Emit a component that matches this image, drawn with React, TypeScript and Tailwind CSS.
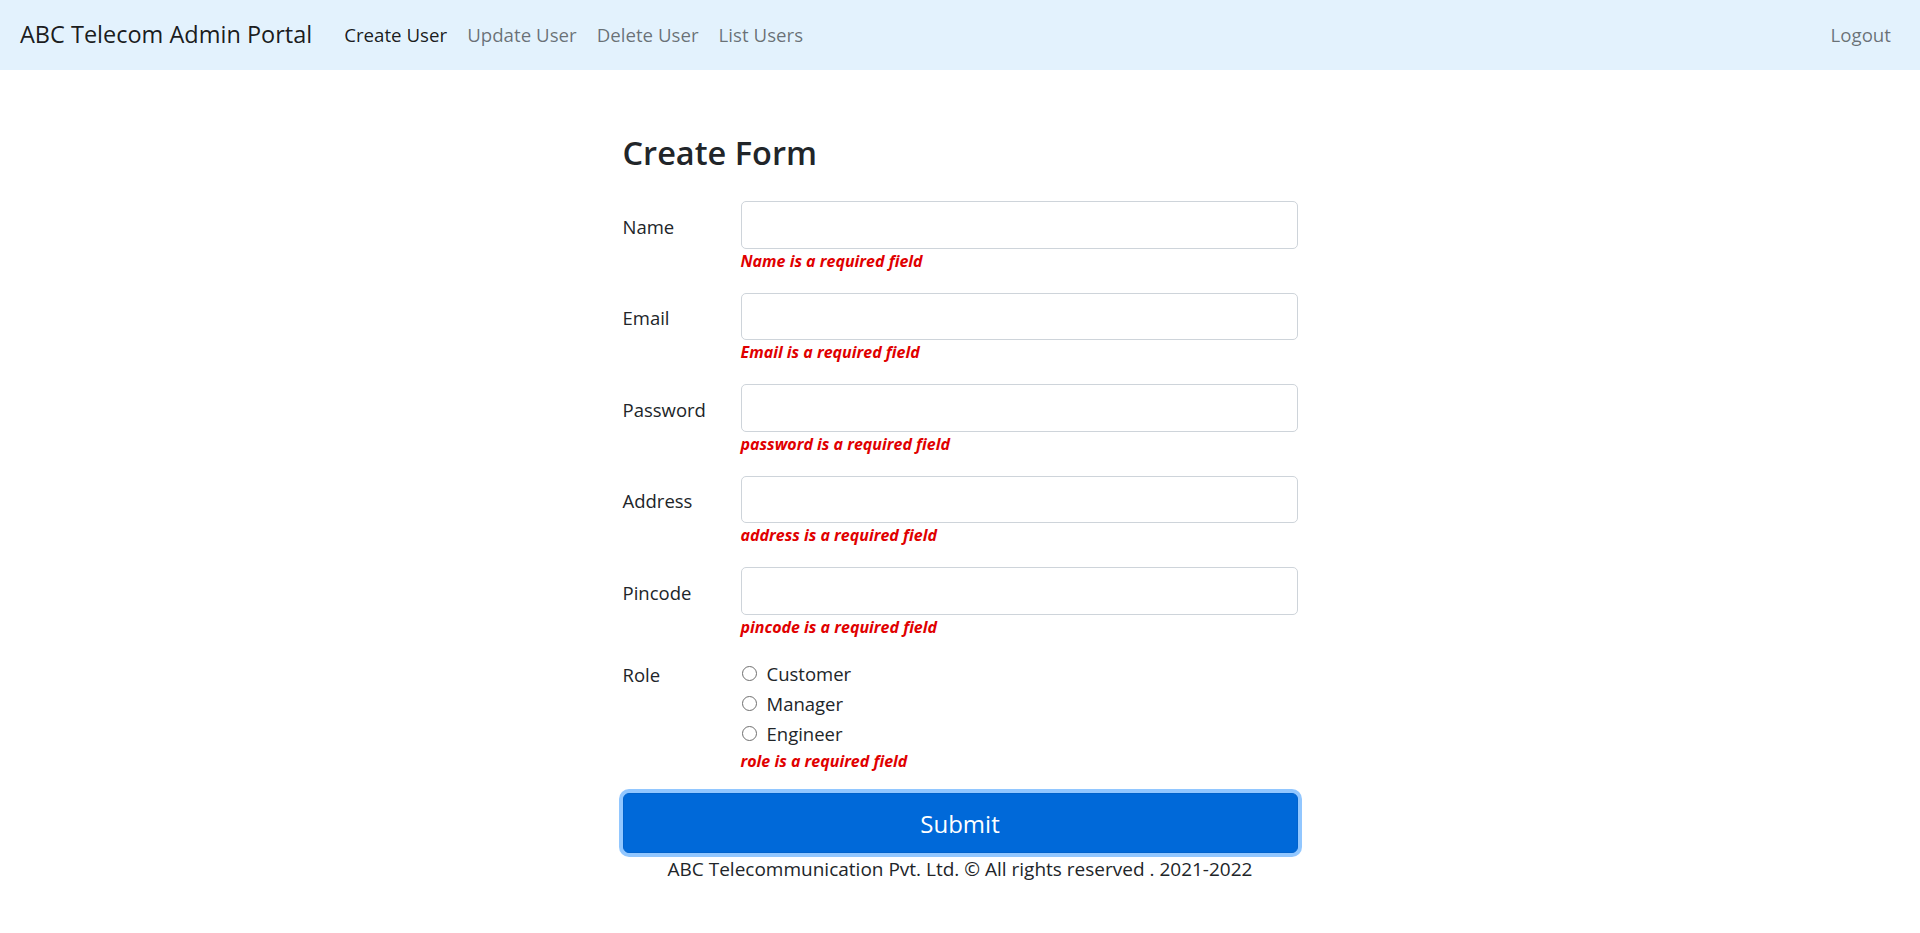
import React from "react";

const FONT = { fontFamily: '"Open Sans", "Noto Sans", sans-serif' } as const;

function Field({ label, error }: { label: string; error: string }) {
  return (
    <div className="grid grid-cols-[118px_1fr] mb-[20px]">
      <label className="pt-[10.5px] text-[18.5px] leading-[30px] text-[#212529]">{label}</label>
      <div>
        <input
          type="text"
          className="block w-full h-[47.5px] rounded-[5px] border border-[#ced4da] bg-white px-[15px] text-[20px] outline-none"
        />
        <div className="text-[16px] leading-[24px] font-bold italic text-[#e00000]">{error}</div>
      </div>
    </div>
  );
}

function Radio({ label }: { label: string }) {
  return (
    <div className="flex items-center h-[30px]">
      <span className="w-[15px] h-[15px] rounded-full border border-[#6f6f6f] bg-white mr-[10px] ml-[1px]" />
      <span className="text-[18.5px] leading-[30px] text-[#212529]">{label}</span>
    </div>
  );
}

export default function App() {
  return (
    <div className="min-h-[933px] bg-white" style={FONT}>
      <nav className="h-[70px] bg-[#e3f2fd] flex items-center pl-[20px] pr-[29px]">
        <span className="text-[23.5px] text-[rgba(0,0,0,0.9)] mr-[32px]">ABC Telecom Admin Portal</span>
        <div className="flex items-center gap-[20px] text-[18.7px]">
          <span className="text-[rgba(0,0,0,0.9)]">Create User</span>
          <span className="text-[rgba(0,0,0,0.55)]">Update User</span>
          <span className="text-[rgba(0,0,0,0.55)]">Delete User</span>
          <span className="text-[rgba(0,0,0,0.55)]">List Users</span>
        </div>
        <span className="ml-auto text-[18.7px] text-[rgba(0,0,0,0.55)]">Logout</span>
      </nav>

      <div className="w-[675px] mx-auto pt-[61.5px]">
        <h3 className="text-[32.5px] leading-[42px] font-semibold text-[#212529] mb-[27.5px]">Create Form</h3>
        <Field label="Name" error="Name is a required field" />
        <Field label="Email" error="Email is a required field" />
        <Field label="Password" error="password is a required field" />
        <Field label="Address" error="address is a required field" />
        <Field label="Pincode" error="pincode is a required field" />
        <div className="grid grid-cols-[118px_1fr] mb-[20px]">
          <label className="pt-[1px] text-[18.5px] leading-[30px] text-[#212529]">Role</label>
          <div>
            <Radio label="Customer" />
            <Radio label="Manager" />
            <Radio label="Engineer" />
            <div className="text-[16px] leading-[24px] font-bold italic text-[#e00000]">role is a required field</div>
          </div>
        </div>
        <button className="block w-full h-[60px] rounded-[6px] bg-[#0069d9] border border-[#0062cc] text-white text-[24px] pt-[2px] shadow-[0_0_0_4px_rgba(38,143,255,0.5)]">
          Submit
        </button>
        <div className="text-center text-[19px] leading-[30px] text-[#212529] mt-[1px]">
          ABC Telecommunication Pvt. Ltd. © All rights reserved . 2021-2022
        </div>
      </div>
    </div>
  );
}
